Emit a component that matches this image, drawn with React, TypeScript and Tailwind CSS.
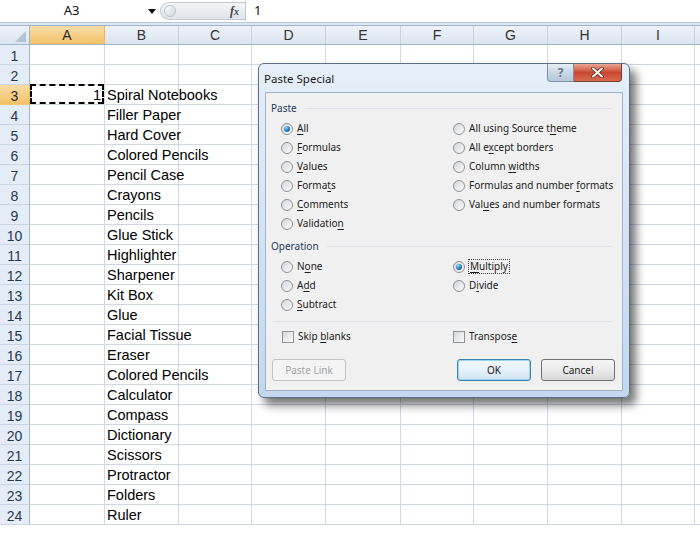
import React from "react";

const COLS: { l: string; w: number }[] = [
  { l: "A", w: 75 },
  { l: "B", w: 74 },
  { l: "C", w: 73 },
  { l: "D", w: 74 },
  { l: "E", w: 75 },
  { l: "F", w: 73 },
  { l: "G", w: 74 },
  { l: "H", w: 74 },
  { l: "I", w: 73 },
];

const ITEMS: Record<number, string> = {
  3: "Spiral Notebooks",
  4: "Filler Paper",
  5: "Hard Cover",
  6: "Colored Pencils",
  7: "Pencil Case",
  8: "Crayons",
  9: "Pencils",
  10: "Glue Stick",
  11: "Highlighter",
  12: "Sharpener",
  13: "Kit Box",
  14: "Glue",
  15: "Facial Tissue",
  16: "Eraser",
  17: "Colored Pencils",
  18: "Calculator",
  19: "Compass",
  20: "Dictionary",
  21: "Scissors",
  22: "Protractor",
  23: "Folders",
  24: "Ruler",
};

const GRID_FONT = { fontFamily: '"Liberation Sans", Arial, sans-serif' };
const UI_FONT = { fontFamily: '"Segoe UI", "Noto Sans", "Open Sans", sans-serif' };

function L({ text, u }: { text: string; u: number }) {
  return (
    <span>
      {text.slice(0, u)}
      <span className="underline underline-offset-2">{text[u]}</span>
      {text.slice(u + 1)}
    </span>
  );
}

function Radio({ checked }: { checked?: boolean }) {
  return (
    <span className="inline-flex w-[12px] h-[12px] shrink-0 items-center justify-center rounded-full border border-[#8f9296] bg-linear-to-br from-[#d4d6d9] to-[#fbfbfb]">
      {checked && (
        <span className="w-[6px] h-[6px] rounded-full bg-[radial-gradient(circle_at_35%_30%,#9fdcff_0%,#2a86cf_45%,#0c4a8a_100%)]" />
      )}
    </span>
  );
}

function RadioRow({
  text,
  u,
  checked,
  focus,
}: {
  text: string;
  u: number;
  checked?: boolean;
  focus?: boolean;
}) {
  return (
    <div className="flex h-[19px] items-center">
      <Radio checked={checked} />
      <span
        className={
          "ml-[4px] leading-[13px] " +
          (focus ? "outline-1 outline-dotted outline-[#444] px-[1px]" : "")
        }
      >
        <L text={text} u={u} />
      </span>
    </div>
  );
}

function Check({ text, u }: { text: string; u: number }) {
  return (
    <div className="flex h-[19px] items-center">
      <span className="w-[12px] h-[12px] shrink-0 border border-[#8f9296] bg-linear-to-br from-[#d6d8db] to-[#fbfbfb]" />
      <span className="ml-[4px]">
        <L text={text} u={u} />
      </span>
    </div>
  );
}

function SectionHead({ text }: { text: string }) {
  return (
    <div className="flex h-[14px] items-center pl-[5px] pr-[10px]">
      <span className="text-[#1e3a5c]">{text}</span>
      <span className="ml-[8px] h-px flex-1 bg-[#dde2e8]" />
    </div>
  );
}

function Dialog() {
  return (
    <div
      className="absolute left-[258px] top-[63px] w-[372px] h-[335px] rounded-[6px] border border-[#5d6f86] bg-linear-to-b from-[#e6eff9] via-[#d3e3f3] to-[#c3d8ee] shadow-[6px_7px_10px_rgba(0,0,0,0.55)] flex flex-col"
      style={UI_FONT}
    >
      <div className="flex h-[28px] items-start justify-between pl-[5px] pr-[7px]">
        <span className="mt-[6px] text-[11.5px] text-[#1b1b1b]">Paste Special</span>
        <div className="flex">
          <div className="flex h-[18px] w-[27px] items-center justify-center rounded-bl-[4px] border border-t-0 border-[#7d8ea3] bg-linear-to-b from-[#e7eef6] via-[#cbd8e6] to-[#b6c7da] text-[12px] font-bold text-[#6b7787]">
            ?
          </div>
          <div className="flex h-[18px] w-[48px] items-center justify-center rounded-br-[4px] border border-l-0 border-t-0 border-[#7a3d33] bg-linear-to-b from-[#e9a697] via-[#c9462f] to-[#d66a4d]">
            <svg width="13" height="11" viewBox="0 0 13 11">
              <path d="M2 1.5 L11 9.5 M11 1.5 L2 9.5" stroke="#5a2218" strokeWidth="3.4" strokeLinecap="round" />
              <path d="M2 1.5 L11 9.5 M11 1.5 L2 9.5" stroke="#ffffff" strokeWidth="2" strokeLinecap="round" />
            </svg>
          </div>
        </div>
      </div>
      <div className="mx-[6px] flex-1 mb-[6px] border border-[#9fb3ca] bg-[#f0f0f0] text-[10px] text-[#1b1b1b] flex flex-col pt-[8px]">
        <SectionHead text="Paste" />
        <div className="mt-[4px] flex">
          <div className="ml-[15px] w-[172px]">
            <RadioRow text="All" u={0} checked />
            <RadioRow text="Formulas" u={0} />
            <RadioRow text="Values" u={0} />
            <RadioRow text="Formats" u={5} />
            <RadioRow text="Comments" u={0} />
            <RadioRow text="Validation" u={9} />
          </div>
          <div>
            <RadioRow text="All using Source theme" u={18} />
            <RadioRow text="All except borders" u={5} />
            <RadioRow text="Column widths" u={7} />
            <RadioRow text="Formulas and number formats" u={20} />
            <RadioRow text="Values and number formats" u={3} />
          </div>
        </div>
        <div className="mt-[6px]">
          <SectionHead text="Operation" />
        </div>
        <div className="mt-[4px] flex">
          <div className="ml-[15px] w-[172px]">
            <RadioRow text="None" u={1} />
            <RadioRow text="Add" u={1} />
            <RadioRow text="Subtract" u={0} />
          </div>
          <div>
            <RadioRow text="Multiply" u={0} checked focus />
            <RadioRow text="Divide" u={1} />
          </div>
        </div>
        <div className="mt-[7px] ml-[7px] mr-[10px] h-px bg-[#dde2e8]" />
        <div className="mt-[5px] flex">
          <div className="ml-[16px] w-[171px]">
            <Check text="Skip blanks" u={5} />
          </div>
          <Check text="Transpose" u={8} />
        </div>
        <div className="mt-[13px] flex pl-[6px] pr-[7px]">
          <div className="flex h-[22px] w-[74px] items-center justify-center rounded-[3px] border border-[#c4c4c4] bg-[#f4f4f4] text-[#a3a3a3]">
            Paste Link
          </div>
          <div className="ml-auto flex h-[22px] w-[74px] items-center justify-center rounded-[3px] border border-[#3c7fb1] bg-linear-to-b from-[#f2f8fd] via-[#e6f1fa] to-[#cfe4f5] shadow-[inset_0_0_0_1px_#9fd1f2]">
            OK
          </div>
          <div className="ml-[10px] flex h-[22px] w-[74px] items-center justify-center rounded-[3px] border border-[#707070] bg-linear-to-b from-[#f4f4f4] via-[#ebebeb] to-[#d6d6d6]">
            Cancel
          </div>
        </div>
      </div>
    </div>
  );
}

function FormulaBar() {
  return (
    <div className="flex h-[22px] items-center bg-white">
      <div className="w-[143px] text-center text-[13px] text-[#111]" style={UI_FONT}>
        A3
      </div>
      <svg width="8" height="5" viewBox="0 0 8 5" className="ml-[5px]">
        <path d="M0 0 H8 L4 5 Z" fill="#111" />
      </svg>
      <div className="ml-[4px] flex h-[18px] w-[85px] items-center rounded-l-full border border-r-0 border-[#c2c9d3] bg-linear-to-b from-[#f3f5f8] to-[#dfe4ea]">
        <span className="ml-[3px] w-[12px] h-[12px] rounded-full border border-[#b9c0c9] bg-linear-to-br from-[#ffffff] to-[#cfd5dc]" />
        <span
          className="ml-auto mr-[6px] text-[12px] italic font-bold text-[#444]"
          style={{ fontFamily: '"Liberation Serif", serif' }}
        >
          f<span className="text-[10px]">x</span>
        </span>
      </div>
      <div className="h-[20px] w-px bg-[#c2c9d3]" />
      <span className="ml-[8px] text-[13px] text-[#111]" style={UI_FONT}>
        1
      </span>
    </div>
  );
}

export default function App() {
  const rows = Array.from({ length: 24 }, (_, i) => i + 1);
  return (
    <div className="relative w-[700px] h-[539px] overflow-hidden bg-white">
      <FormulaBar />
      <div className="h-[4px] border-t border-b border-t-[#b9c9dc] border-b-[#9fb5cf] bg-[#dde7f2]" />
      <div style={GRID_FONT}>
        <div className="flex h-[19px] border-b border-[#9eb6ce]">
          <div className="relative w-[30px] shrink-0 border-r border-[#9eb6ce] bg-linear-to-b from-[#eef3f9] to-[#dbe4ef]">
            <svg width="11" height="11" viewBox="0 0 11 11" className="absolute right-[3px] bottom-[2px]">
              <path d="M11 0 V11 H0 Z" fill="#b4c2d3" />
            </svg>
          </div>
          {COLS.map((c) => (
            <div
              key={c.l}
              style={{ width: c.w }}
              className={
                "shrink-0 flex items-center justify-center border-r text-[14px] pt-[1px] " +
                (c.l === "A"
                  ? "border-[#f2b74f] bg-linear-to-b from-[#f9dca6] to-[#f3c167] text-[#2a2a2a]"
                  : "border-[#c3d1e1] bg-linear-to-b from-[#eef3f9] to-[#dbe4ef] text-[#333]")
              }
            >
              {c.l}
            </div>
          ))}
          <div className="flex-1 bg-linear-to-b from-[#eef3f9] to-[#dbe4ef]" />
        </div>
        {rows.map((r) => (
          <div key={r} className="flex h-[20px]">
            <div
              className={
                "w-[30px] shrink-0 flex items-center justify-center border-r border-b text-[14px] pt-[3px] " +
                (r === 3
                  ? "border-r-[#f2b74f] border-b-[#f2c77a] bg-linear-to-b from-[#f9dca6] to-[#f3c167] text-[#2a2a2a]"
                  : "border-r-[#9eb6ce] border-b-[#c9d6e6] bg-[#e4ecf7] text-[#26384f]")
              }
            >
              {r}
            </div>
            {COLS.map((c) => (
              <div
                key={c.l}
                style={{ width: c.w }}
                className="relative shrink-0 border-r border-b border-[#d0d7e5] flex items-center pt-[3px] text-[14.5px] text-black"
              >
                {c.l === "A" && r === 3 && (
                  <>
                    <span className="ml-auto mr-[3px]">1</span>
                    <span className="absolute left-[0px] top-[-1px] right-[0px] bottom-[0px] border-2 border-dashed border-black" />
                  </>
                )}
                {c.l === "B" && ITEMS[r] && (
                  <span className="ml-[2px] whitespace-nowrap">{ITEMS[r]}</span>
                )}
              </div>
            ))}
            <div className="flex-1 border-b border-[#d0d7e5]" />
          </div>
        ))}
      </div>
      <Dialog />
    </div>
  );
}
